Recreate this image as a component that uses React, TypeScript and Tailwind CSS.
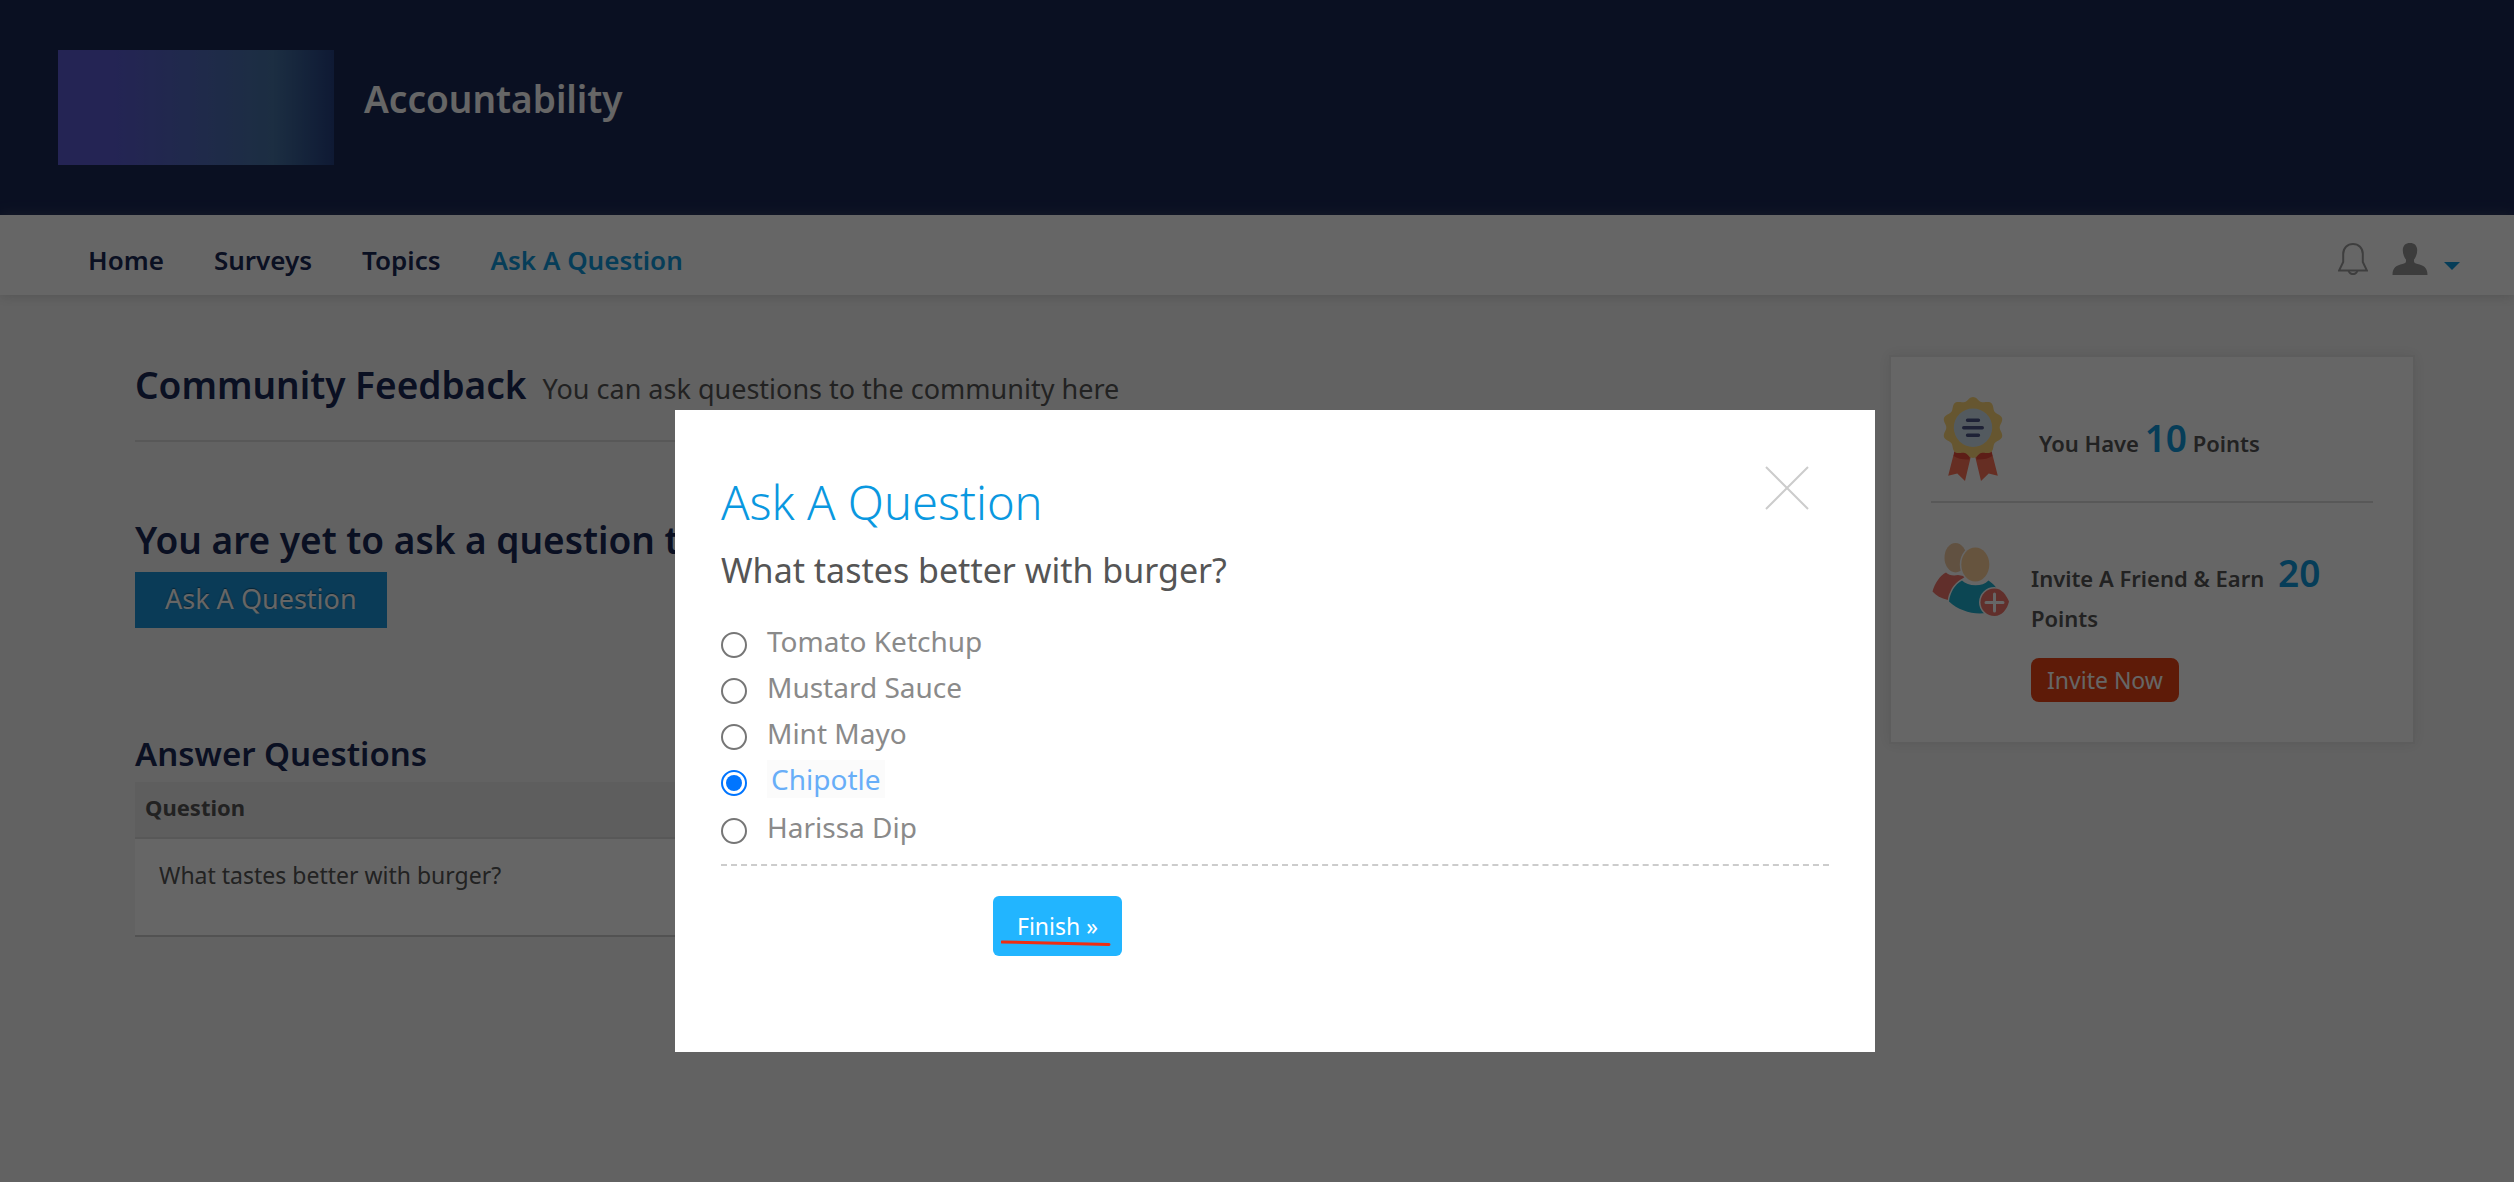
import React, { useState } from 'react';

const navItems = ['Home', 'Surveys', 'Topics', 'Ask A Question'];
const options = ['Tomato Ketchup', 'Mustard Sauce', 'Mint Mayo', 'Chipotle', 'Harissa Dip'];

function scallop(cx: number, cy: number, r: number, depth: number, lobes: number) {
  const points: string[] = [];
  for (let i = 0; i < 180; i++) {
    const a = (i / 180) * Math.PI * 2;
    const d = r + depth * Math.cos(lobes * a);
    points.push(`${(cx + d * Math.sin(a)).toFixed(2)} ${(cy - d * Math.cos(a)).toFixed(2)}`);
  }
  return `M${points.join('L')}Z`;
}

const badgePath = scallop(30, 30.5, 28.6, 1.9, 10);

function BellIcon() {
  return (
    <svg className="h-8 w-[30px]" viewBox="0 0 30 32" fill="none" stroke="#9c9c9c" strokeWidth="2" aria-hidden="true">
      <path d="M5.2 11C5.2 5 9.4 1 15 1s9.8 4 9.8 10v8l4 8.4H1.2l4-8.4z" />
      <path d="M10.5 27.6c.6 2.2 2.3 3.5 4.5 3.5s3.9-1.3 4.5-3.5" />
    </svg>
  );
}

function UserIcon() {
  return (
    <svg className="h-8 w-9" viewBox="0 0 36 32" fill="#969696" aria-hidden="true">
      <path d="M18 0c4.4 0 7.2 2.6 7.2 7.2 0 3.2-1.2 7-3.2 9.4v1.6c0 1.4 1.2 2.2 3.6 2.9 5.6 1.4 9.9 3.3 9.9 10.9H.5c0-7.6 4.3-9.5 9.9-10.9 2.4-.7 3.6-1.5 3.6-2.9v-1.6c-2-2.4-3.2-6.2-3.2-9.4C10.800 2.600 13.600 0 18 0z" />
    </svg>
  );
}

function RibbonIcon() {
  return (
    <svg className="h-[84px] w-[60px]" viewBox="0 0 60 84" aria-hidden="true">
      <path d="M11.500 54 27.700 60 22 84 14.300 76.500 5.200 78.700z" fill="#ff7358" />
      <path d="M48.500 54 32.300 60 38 84 45.700 76.500 54.800 78.700z" fill="#ff7358" />
      <path d="M11.500 55h15.500l-.6 7.500c-6.200.3-12-.8-15.800-3.500zM48.500 55H33l.6 7.500c6.200.3 12-.8 15.800-3.500z" fill="#e84c3a" />
      <path d={badgePath} fill="#ffd878" />
      <circle cx="30" cy="30.700" r="19.200" fill="#cfe2ee" />
      <path d="M24.500 23.300h11M20.700 30.700h18.600M24.500 38.200h11" stroke="#4d5587" strokeWidth="3.400" strokeLinecap="round" />
    </svg>
  );
}

function InviteIcon() {
  return (
    <svg className="h-[76px] w-[78px] shrink-0" viewBox="0 0 78 76" aria-hidden="true">
      <ellipse cx="24.500" cy="14.700" rx="11" ry="14.700" fill="#f2cba2" />
      <path d="M15 29.500C17.500 32 22 33 27 32l8 1.500C29 36 20 44 17 57 10 55.500 5 52.500 1.500 48.500 4 40 9 32.500 15 29.500z" fill="#f2766c" />
      <ellipse cx="44.300" cy="21.500" rx="14" ry="17" fill="#ffd29c" stroke="#fff" strokeWidth="3" paintOrder="stroke" />
      <path d="M31 37.500C34 40.500 39 42.300 44.500 42.300S54 41 57.500 37.500C63 41 67 46 68.500 52L56 69.800C43 72 28 68 18 58.500 19 50 23.500 41.500 31 37.500z" fill="#1fb0cf" stroke="#fff" strokeWidth="3" paintOrder="stroke" />
      <path d="M63.500 45.500C71 45.500 75 52 78 58.500 76 66.500 71 73 63.500 73S49.500 67 49.500 59.300 55.800 45.500 63.500 45.500z" fill="#f2766c" stroke="#fff" strokeWidth="3" paintOrder="stroke" />
      <path d="M63.500 51v17M55 59.500h17" stroke="#fff" strokeWidth="3" strokeLinecap="round" />
    </svg>
  );
}

export default function App() {
  const [choice, setChoice] = useState('Chipotle');

  return (
    <div className="min-h-screen bg-[#f5f5f5] font-['Noto_Sans',sans-serif] text-[#555555]">
      <header className="flex items-start gap-[30px] bg-[#1a2856] px-[58px] py-[50px]">
        <div className="h-[115px] w-[276px] bg-linear-to-r from-[#5a5ad2] from-20% via-[#4673a5] via-78% to-[#264182]" />
        <p className="text-[37px] leading-[98px] font-semibold text-white">Accountability</p>
      </header>

      <div className="relative flex h-20 items-center justify-between bg-white pr-[54px] pl-[88px] shadow-[0_0_12px_rgba(128,128,128,0.35)]">
        <nav className="flex gap-[50px] pt-2.5 text-[26px] leading-9 font-semibold text-[#192855]">
          {navItems.map((item) => (
            <a key={item} href="#" className="last:text-[#1098dc]">
              {item}
            </a>
          ))}
        </nav>
        <div className="flex items-center gap-6 pt-2">
          <button type="button" aria-label="Notifications">
            <BellIcon />
          </button>
          <button type="button" aria-label="Account" className="flex items-center gap-4">
            <UserIcon />
            <svg className="mt-3.5 h-2 w-4" viewBox="0 0 16 8" aria-hidden="true">
              <path d="M0 0h16L8 8z" fill="#1098dc" />
            </svg>
          </button>
        </div>
      </div>

      <main className="flex items-start gap-[30px] pt-[60px] pr-[99px] pl-[135px]">
        <section className="min-w-0 flex-1 pt-1.5">
          <div className="flex items-baseline gap-4 border-b-2 border-[#dcdcdc] pb-[30px]">
            <h1 className="text-[37px] leading-[48px] font-semibold text-[#192855]">Community Feedback</h1>
            <p className="text-[27px]">You can ask questions to the community here</p>
          </div>

          <h2 className="mt-[74px] text-[37px] leading-[48px] font-semibold text-[#192855]">
            You are yet to ask a question to the community
          </h2>
          <button
            type="button"
            className="mt-2 h-14 bg-[#1993d9] px-[30px] text-[27px] text-white [text-shadow:0_-1px_1px_rgba(0,0,0,0.4)]"
          >
            Ask A Question
          </button>

          <h3 className="mt-[102px] text-[33px] leading-[48px] font-semibold text-[#192855]">Answer Questions</h3>
          <table className="mt-1 w-full border-collapse text-left">
            <thead>
              <tr className="h-14 border-b-2 border-[#dcdcdc] bg-[#ebebeb]">
                <th className="px-2.5 pb-1 text-[22px] font-bold">Question</th>
              </tr>
            </thead>
            <tbody>
              <tr className="h-[98px] border-b-2 border-[#cccccc] bg-white">
                <td className="px-6 pt-[18px] align-top text-[23px] leading-9">What tastes better with burger?</td>
              </tr>
            </tbody>
          </table>
        </section>

        <aside className="w-[526px] border-2 border-[#e8e8e8] bg-white px-10 py-10 font-semibold shadow-[0_0_12px_rgba(128,128,128,0.15)]">
          <div className="flex items-center border-b-2 border-[#dcdcdc] pb-5">
            <div className="flex w-[84px] justify-center">
              <RibbonIcon />
            </div>
            <p className="pb-0.5 pl-6 text-[22px]">
              You Have <span className="text-[37px] leading-[48px] text-[#1098dc]">10</span> Points
            </p>
          </div>
          <div className="flex items-start gap-[22px] pt-10">
            <InviteIcon />
            <div className="pt-2.5">
              <p className="text-[22px] leading-10">
                Invite A Friend &amp; Earn <span className="ml-2 text-[37px] text-[#1098dc]">20</span> Points
              </p>
              <button
                type="button"
                className="mt-5 h-11 rounded-lg bg-[#eb4414] px-4 text-[23px] font-normal text-white"
              >
                Invite Now
              </button>
            </div>
          </div>
        </aside>
      </main>

      <div className="fixed inset-0 flex items-start justify-center bg-black/60 pt-[410px] pl-9">
        <div
          role="dialog"
          aria-modal="true"
          aria-labelledby="ask-title"
          className="relative w-full max-w-[1200px] bg-white px-[46px] pt-16 pb-24"
        >
          <button type="button" aria-label="Close" className="absolute top-14 right-[66px]">
            <svg className="h-11 w-11" viewBox="0 0 44 44" fill="none" stroke="#cccccc" strokeWidth="2" aria-hidden="true">
              <path d="M1 1l42 42M43 1L1 43" />
            </svg>
          </button>
          <h2 id="ask-title" className="text-[47px] leading-[56px] font-light text-[#0a98e0]">
            Ask A Question
          </h2>
          <form onSubmit={(e) => e.preventDefault()}>
            <fieldset className="border-b-2 border-dashed border-[#cccccc] pb-3.5">
              <legend className="pt-4 text-[34px] leading-[48px]">What tastes better with burger?</legend>
              <div className="pt-6">
                {options.map((option) => (
                  <label key={option} className="flex items-center gap-5 text-[28px] leading-[46px] text-[#8a8a8a] has-checked:pb-0.5">
                    <input
                      type="radio"
                      name="answer"
                      value={option}
                      checked={choice === option}
                      onChange={() => setChoice(option)}
                      className="peer mt-2 h-[26px] w-[26px] appearance-none rounded-full border-2 border-[#767676] p-[3px] checked:border-[#0075ff] checked:bg-[#0075ff] checked:bg-clip-content"
                    />
                    <span className="peer-checked:text-[#68aef8]">
                      <span className={option === choice ? 'bg-[#fbfbfb] px-1' : undefined}>{option}</span>
                    </span>
                  </label>
                ))}
              </div>
            </fieldset>
            <button
              type="submit"
              className="relative mt-[30px] ml-[272px] h-[60px] rounded-md bg-[#22b5ff] px-6 text-[23px] text-white"
            >
              Finish »
              <svg className="absolute bottom-2.5 left-2 h-1.5 w-[110px]" viewBox="0 0 110 6" aria-hidden="true">
                <path d="M1 2L108 4.500" stroke="#ee2d12" strokeWidth="3" strokeLinecap="round" />
              </svg>
            </button>
          </form>
        </div>
      </div>
    </div>
  );
}
